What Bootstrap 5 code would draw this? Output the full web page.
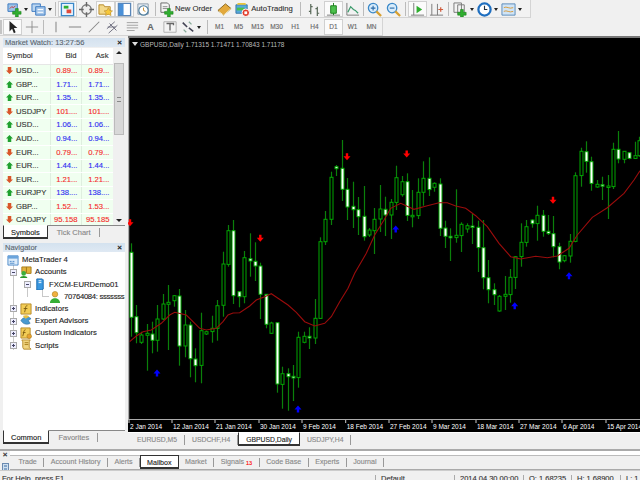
<!DOCTYPE html>
<html lang="en">
<head>
<meta charset="UTF-8">
<title>MetaTrader 4</title>
<link href="https://cdn.jsdelivr.net/npm/bootstrap@5.3.0/dist/css/bootstrap.min.css" rel="stylesheet">
<style>
html, body { height: 100%; overflow: hidden; }
body { background: #f0f0f0; font-family: "Liberation Sans", Arial, sans-serif; font-size: 7.500px; color: #333; line-height: 1; -webkit-text-stroke: .12px; }
.app { width: 640px; height: 480px; overflow: hidden; }
/* toolbars */
.tools { height: 36px; flex: none; }
.tbar { background: #f2f2f2; border-bottom: 1px solid #d4d4d4; border-right: 1px solid #d4d4d4; }
.tbar-a { width: 531px; height: 18px; padding: 1px 0 0 5px; }
.tbar-b { width: 383px; height: 18px; margin-top: 0; padding-top: 1px; }
.tb { height: 16px; width: 19px; flex: none; display: flex; align-items: center; justify-content: center; color: #666; font-size: 6.500px; }
.tb.on { background: #fbfbfb; box-shadow: inset 0 0 0 1px #d0d0d0; }
.tb.dd { width: 24px; justify-content: flex-start; padding-left: 2px; gap: 2px; }
.tb.dd-w { width: 26px; }
.tb.txt { width: auto; gap: 1px; font-size: 7.700px; color: #333; padding: 0 3px 0 1px; }
.tb.pad-r { padding-right: 5px; }
.tb.glyph-a { font-size: 9px; font-weight: 700; }
.caret-d { width: 0; height: 0; border: 2.500px solid transparent; border-top: 3px solid #222; border-bottom: 0; }
.tsep { width: 1px; height: 14px; background: #bbb; margin: 0 2px; flex: none; }
.tsep.tight { margin: 0 1px; }
.tsep.wide { margin-right: 4px; }
.grip { width: 3px; height: 14px; border-left: 2px solid #c4c4c4; flex: none; }
/* left panes */
.side { width: 128px; flex: none; padding: 2px 3px 0; }
.ptitle { height: 9px; background: linear-gradient(#d4e2ef, #dfe9f3); color: #5a6670; padding: 1px 2px 0; flex: none; }
.ptitle b { font-size: 8px; color: #222; margin-right: 1px; line-height: 7px; }
.ptitle.nav-t { margin-top: 4px; }
.mw { flex: none; height: 177px; background: #fff; margin-top: 1px; }
.mw-table { width: 110px; margin: 0; table-layout: fixed; --bs-table-bg: transparent; }
.mw-table th, .mw-table td { padding: 0 0 0 3px; height: 13.600px; border: 0; border-right: 1px solid #dfeedf; border-bottom: 1px solid #fff; font-weight: 400; font-size: 7.700px; white-space: nowrap; background: #f0fff0; box-shadow: none; color: #333; line-height: 1; vertical-align: middle; }
.mw-table th { height: 16px; background: #fff; border-bottom: 1px solid #e6e6e6; border-right: 1px solid #eee; padding-left: 4px; }
.mw-table .num { text-align: right; padding: 0 3px 0 0; }
.mw-table th.num { padding-right: 4px; }
.mw-table td.up { color: #2d2df0; }
.mw-table td.dn { color: #f52a2a; }
.tick { display: inline-block; width: 7px; height: 7px; margin-right: 3px; vertical-align: -1px; }
.scrl { width: 12px; background: #f0f0f0; position: relative; flex: none; }
.scrl-thumb { height: 72px; margin: 9px 1px 0; background: #d8d8d8; border: 1px solid #bbb; position: relative; }
.scrl-thumb::after { content: ""; position: absolute; left: 2px; right: 2px; top: 33px; height: 5px; border-top: 1px solid #888; border-bottom: 1px solid #888; }
.scrl i { display: block; width: 0; margin: 3px auto 0; border: 3px solid transparent; border-bottom: 3px solid #222; border-top: 0; }
.scrl i.low { position: absolute; bottom: 3px; left: 3px; margin: 0; border-bottom: 0; border-top: 3px solid #222; }
.ptabs { height: 14px; flex: none; border-top: 1px solid #888; background: #f0f0f0; flex-wrap: nowrap; color: #888; }
.ptab { padding: 1px 8px 0; border-right: 1px solid #999; height: 9px; margin-top: 2px; white-space: nowrap; }
.ptab.act { background: #fff; color: #222; height: 14px; margin: -1px 1px 0 0; padding: 3px 7px 0; border: 1px solid #333; border-top-color: #fff; border-bottom-width: 2px; }
.nav-pane { background: #fff; height: 178px; flex: none; position: relative; padding-top: 2px; }
.tree { margin: 0; padding: 0; list-style: none; white-space: nowrap; color: #222; }
.tree li { height: 12.200px; display: flex; align-items: center; gap: 3px; font-size: 7.700px; }
.tree svg { flex: none; }
.lv0 { padding-left: 4px; }
.lv1 { padding-left: 7px; }
.lv2 { padding-left: 21px; }
.tree li.lv3 { padding-left: 46px; letter-spacing: -.3px; }
.tline { position: absolute; left: 10px; top: 12px; width: 1px; height: 86px; background: #c8c8c8; }
.tline2 { position: absolute; left: 24px; top: 32px; width: 1px; height: 13px; background: #c8c8c8; }
.tline3 { position: absolute; left: 39px; top: 33px; width: 7px; height: 12px; border-left: 1px solid #c8c8c8; border-bottom: 1px solid #c8c8c8; }
.xp { width: 7px; height: 7px; border: 1px solid #aaa; background: #eef; position: relative; flex: none; }
.xp::before { content: ""; position: absolute; left: 1px; right: 1px; top: 2px; height: 1px; background: #446; }
.xp.pl::after { content: ""; position: absolute; top: 1px; bottom: 1px; left: 2px; width: 1px; background: #446; }
/* chart */
.chart-wrap { min-width: 0; }
.chart-top { height: 2px; background: #777; flex: none; }
.chart-svg { display: block; width: 512px; height: 394px; flex: none; background: #000; }
.ctabs { height: 14px; flex: none; border-top: 1px solid #fff; background: #f0f0f0; color: #888; padding-left: 2px; font-size: 6.800px; }
.ctab { padding: 2px 7px 0; border-right: 1px solid #999; height: 10px; margin-top: 2px; white-space: nowrap; }
.ctab.act { background: #fff; color: #222; height: 14px; margin: -1px 0 0 0; padding: 4px 7px 0; border: 1px solid #333; border-top-color: #fff; border-bottom-width: 2px; }
/* terminal */
.term { height: 21px; flex: none; border-top: 2px solid #aaa; position: relative; }
.term-x { width: 10px; flex: none; font-size: 8px; padding-top: 0; }
.term-strip { height: 5px; background: #fff; border-bottom: 1px solid #bbb; flex: none; }
.term-tabs { height: 14px; color: #888; padding-left: 2px; border-bottom: 1px solid #aaa; flex: none; font-size: 7.100px; }
.ttab { padding: 1px 6.500px 0; border-right: 1px solid #999; height: 9px; margin-top: 2px; white-space: nowrap; }
.ttab.act { background: #fff; color: #222; height: 14px; margin: -1px 0 0 0; padding: 4px 6px 0; border: 1px solid #333; border-bottom-width: 2px; }
.ttab sup { color: #f00; font-size: 5.500px; top: 1px; vertical-align: baseline; position: relative; }
.stat { height: 10px; flex: none; border-top: 1px solid #ccc; overflow: hidden; color: #333; padding-top: 4px; white-space: nowrap; }
.stat-help { width: 375px; flex: none; padding-left: 2px; }
.scell { padding-left: 5px; border-left: 1px solid #aaa; height: 14px; flex: none; }
.chart-svg text { font-family: "Liberation Sans", Arial, sans-serif; font-size: 6.500px; }
</style>
</head>
<body>
<svg width="0" height="0" class="d-block position-absolute">
  <defs>
    <symbol id="i-new" viewBox="0 0 16 16"><path d="M1 2h10v8H1z" fill="#9cc3e8" stroke="#3a78c0"/><path d="M3 7l2-2 2 1 2-2" stroke="#c33" fill="none"/><path d="M9 7h3v3h3v3h-3v3H9v-3H6v-3h3z" fill="#2fae2f" stroke="#1a7d1a" stroke-width=".6"/></symbol>
    <symbol id="i-prof" viewBox="0 0 16 16"><path d="M1 2h9v8H1z" fill="#bcd6f0" stroke="#3a78c0"/><path d="M5 5h10v9H5z" fill="#a5c6ea" stroke="#3a78c0"/><path d="M7 8h6M7 11h6" stroke="#fff"/></symbol>
    <symbol id="i-mw" viewBox="0 0 16 16"><path d="M1.500 1.500h13v13h-13z" fill="#e8f4ff" stroke="#3a88c8" stroke-width="1.400"/><path d="M4 4h5v3H4z" fill="#2fae2f"/><path d="M7 8h5v4H7z" fill="#e04a3a"/></symbol>
    <symbol id="i-nav" viewBox="0 0 16 16"><circle cx="8" cy="8" r="5" fill="#eee" stroke="#777" stroke-width="1.500"/><path d="M8 0v5M8 11v5M0 8h5M11 8h5" stroke="#666" stroke-width="1.500"/></symbol>
    <symbol id="i-fold" viewBox="0 0 16 16"><path d="M1 3h5l1 2h6v8H1z" fill="#f3d98a" stroke="#b58a2a"/><path d="M11 6l1.500 3 3 .5-2.200 2 .6 3-2.900-1.500-2.900 1.500.6-3-2.200-2 3-.5z" fill="#f7c83a" stroke="#b58a2a" stroke-width=".6"/></symbol>
    <symbol id="i-term" viewBox="0 0 16 16"><path d="M1.500 1.500h13v13h-13z" fill="#fff" stroke="#5a86b8" stroke-width="1.400"/><path d="M2 2h5v12H2z" fill="#4a90d8"/></symbol>
    <symbol id="i-test" viewBox="0 0 16 16"><path d="M2 2h11v11H2z" fill="#e8eef4" stroke="#8a9aaa"/><circle cx="8" cy="9" r="5" fill="#fff" stroke="#4a7a9a" stroke-width="1.200"/><path d="M8 6v3l2 1" stroke="#c88a2a" fill="none"/></symbol>
    <symbol id="i-order" viewBox="0 0 16 16"><path d="M2 1h7l2 2v8H2z" fill="#f4f4f4" stroke="#666"/><path d="M4 5h5M4 7h5" stroke="#888"/><path d="M9 7h3v3h3v3h-3v3H9v-3H6v-3h3z" fill="#2fae2f" stroke="#1a7d1a" stroke-width=".6"/></symbol>
    <symbol id="i-book" viewBox="0 0 16 16"><path d="M1 9l8-7 6 5-8 7z" fill="#e3a93c" stroke="#8a6418"/><path d="M2 10l5 4 8-7" fill="none" stroke="#fff3c8"/></symbol>
    <symbol id="i-auto" viewBox="0 0 16 16"><path d="M1 3h12v9H1z" fill="#55a8dc" stroke="#3a78a8"/><path d="M3 1h8l1 2H2z" fill="#e8c53a"/><path d="M2 6h8v3H2z" fill="#4cbf4c"/><circle cx="11.500" cy="11.500" r="4" fill="#e03a2a" stroke="#fff"/><rect x="10" y="10" width="3" height="3" fill="#fff"/></symbol>
    <symbol id="i-bars" viewBox="0 0 16 16"><path d="M4 2v11M2 10h2M4 5h2M11 5v10M9 7h2M11 12h2" stroke="#5a6a5a" stroke-width="1.300" fill="none"/></symbol>
    <symbol id="i-candle" viewBox="0 0 16 16"><path d="M1 14h14" stroke="#777"/><path d="M8 1v13" stroke="#1a7d1a"/><path d="M5 4h6v8H5z" fill="#4cc04c" stroke="#1a7d1a"/></symbol>
    <symbol id="i-line" viewBox="0 0 16 16"><path d="M2 1v13h13" stroke="#777" fill="none"/><path d="M3 11l3-6 3 3 2 1 3 3" stroke="#3a9a6a" stroke-width="1.300" fill="none"/></symbol>
    <symbol id="i-zin" viewBox="0 0 16 16"><circle cx="6.500" cy="6.500" r="5" fill="#d8ecfb" stroke="#3a88c8" stroke-width="1.400"/><path d="M4 6.500h5M6.500 4v5" stroke="#2a6aa8" stroke-width="1.200"/><path d="M10 10l5 5" stroke="#d8a030" stroke-width="2.400"/></symbol>
    <symbol id="i-zout" viewBox="0 0 16 16"><circle cx="6.500" cy="6.500" r="5" fill="#d8ecfb" stroke="#3a88c8" stroke-width="1.400"/><path d="M4 6.500h5" stroke="#2a6aa8" stroke-width="1.200"/><path d="M10 10l5 5" stroke="#d8a030" stroke-width="2.400"/></symbol>
    <symbol id="i-ascr" viewBox="0 0 16 16"><path d="M1 14h14M4 1v13" stroke="#777"/><path d="M7 4l6 4-6 4z" fill="#2fae2f"/></symbol>
    <symbol id="i-shift" viewBox="0 0 16 16"><path d="M1 14h14M3 2v12M9 2v12" stroke="#777"/><path d="M10 8h5M12.500 5.500v5" stroke="#d05a3a" stroke-width="1.300"/></symbol>
    <symbol id="i-tmpl" viewBox="0 0 16 16"><path d="M1 1h8v10H1zM5 3h7v9H5z" fill="#f4f4f4" stroke="#777"/><path d="M8 8h3v3h3v3h-3v2H8v-2H5v-3h3z" fill="#2fae2f" stroke="#1a7d1a" stroke-width=".6"/></symbol>
    <symbol id="i-clock" viewBox="0 0 16 16"><circle cx="8" cy="8" r="6.500" fill="#fff" stroke="#1f6fc0" stroke-width="2.400"/><path d="M8 4v4h3" stroke="#234" fill="none" stroke-width="1.200"/></symbol>
    <symbol id="i-pic" viewBox="0 0 16 16"><path d="M1 2h14v12H1z" fill="#cfe4f6" stroke="#5a8ab8"/><path d="M3 6c3-2 6 2 10 0M3 10c3-2 6 2 10 0" stroke="#d89a3a" fill="none"/></symbol>
    <symbol id="i-arrow" viewBox="0 0 16 16"><path d="M4 1l9 8H9l2 5-2 1-2-5-3 3z" fill="#222"/></symbol>
    <symbol id="i-cross" viewBox="0 0 16 16"><path d="M8 1v14M1 8h14" stroke="#888"/></symbol>
    <symbol id="i-vl" viewBox="0 0 16 16"><path d="M8 2v12" stroke="#888" stroke-width="1.200"/></symbol>
    <symbol id="i-hl" viewBox="0 0 16 16"><path d="M1 8h14" stroke="#888" stroke-width="1.200"/></symbol>
    <symbol id="i-tl" viewBox="0 0 16 16"><path d="M2 14L14 2" stroke="#888" stroke-width="1.200"/></symbol>
    <symbol id="i-chan" viewBox="0 0 16 16"><path d="M1 10l9-8M3 15l10-9M4 4l8 8M2 8h9" stroke="#667" fill="none"/></symbol>
    <symbol id="i-fib" viewBox="0 0 16 16"><path d="M2 3h13M2 6h13M2 9h13M2 12h9" stroke="#999"/></symbol>
    <symbol id="i-ta" viewBox="0 0 16 16"><path d="M1 2h14v12H1z" fill="#f4f4f4" stroke="#aaa"/><path d="M4 4h8v2M8 4v8" stroke="#666" stroke-width="1.500" fill="none"/></symbol>
    <symbol id="i-arrs" viewBox="0 0 16 16"><path d="M2 3l5 5M9 9l5 4" stroke="#445" stroke-width="1.800"/><path d="M9 2l3 3M3 11l3 3" stroke="#8a9" stroke-width="1.500"/></symbol>
    <symbol id="i-up" viewBox="0 0 8 8"><path d="M4 0l4 4H6v4H2V4H0z" fill="#1fa02f"/></symbol>
    <symbol id="i-dn" viewBox="0 0 8 8"><path d="M4 8L0 4h2V0h4v4h2z" fill="#d9552a"/></symbol>
    <symbol id="i-mt" viewBox="0 0 13 13"><path d="M1 2h11v10H1z" fill="#dcebf9" stroke="#4a88c8"/><path d="M1 2h11v3H1z" fill="#6aa4dc"/><path d="M3 8h2M6 8h2M3 10h5" stroke="#4a88c8"/></symbol>
    <symbol id="i-acc" viewBox="0 0 13 13"><path d="M2 1h5v6H2zM7 1h5v7H7z" fill="#e3b23c" stroke="#a67c1a"/><circle cx="4" cy="8" r="2.500" fill="#3cae3c"/><path d="M0 13c0-3 8-3 8 0z" fill="#2a9a2a"/></symbol>
    <symbol id="i-srv" viewBox="0 0 13 13"><path d="M3 1h6l1 1v10l-2 1H3z" fill="#3a98e0" stroke="#1c6cb0"/><path d="M5 3h3M5 5h3" stroke="#fff"/></symbol>
    <symbol id="i-usr" viewBox="0 0 13 13"><circle cx="6.500" cy="3.500" r="3" fill="#f0b040" stroke="#a67c1a" stroke-width=".6"/><path d="M1 13c0-7 11-7 11 0z" fill="#36ae36"/></symbol>
    <symbol id="i-ind" viewBox="0 0 13 13"><path d="M1 1h11v11H1z" fill="#f2cc55" stroke="#b58a2a"/><path d="M8 3c-2 0-2 1-2 3l-1 4M4 6h4" stroke="#7a5a10" fill="none"/></symbol>
    <symbol id="i-ea" viewBox="0 0 13 13"><path d="M1 6c2-4 8-5 11-2l-3 2 2 3c-3 2-8 1-10-3z" fill="#4a9ad0" stroke="#2a6a98" stroke-width=".6"/><path d="M3 1c2-1 6-1 7 1L6 4z" fill="#e8c040"/></symbol>
    <symbol id="i-cus" viewBox="0 0 13 13"><path d="M1 1h10v11H1z" fill="#f2cc55" stroke="#b58a2a"/><path d="M6 3c-1 0-2 1-2 3l-1 4M3 6h3" stroke="#7a5a10" fill="none"/><circle cx="10" cy="10" r="2.500" fill="#e8a030" stroke="#a67c1a" stroke-width=".6"/></symbol>
    <symbol id="i-scr" viewBox="0 0 13 13"><path d="M2 1h9l-1 2v6l2 2H4L3 9V3z" fill="#f0d480" stroke="#b58a2a"/><path d="M5 4h4M5 6h4" stroke="#a67c1a"/></symbol>
  </defs>
</svg>

<div class="app d-flex flex-column">
  <div class="tools">
    <div class="tbar tbar-a d-flex align-items-center">
      <div class="tb dd"><svg width="15" height="15"><use href="#i-new"/></svg><span class="caret-d"></span></div>
      <div class="tb dd"><svg width="15" height="15"><use href="#i-prof"/></svg><span class="caret-d"></span></div>
      <span class="tsep"></span>
      <div class="tb on"><svg width="15" height="15"><use href="#i-mw"/></svg></div>
      <div class="tb"><svg width="15" height="15"><use href="#i-nav"/></svg></div>
      <div class="tb on"><svg width="15" height="15"><use href="#i-fold"/></svg></div>
      <div class="tb on"><svg width="15" height="15"><use href="#i-term"/></svg></div>
      <div class="tb"><svg width="15" height="15"><use href="#i-test"/></svg></div>
      <span class="tsep"></span>
      <div class="tb txt"><svg width="15" height="15"><use href="#i-order"/></svg>New Order</div>
      <div class="tb"><svg width="15" height="15"><use href="#i-book"/></svg></div>
      <div class="tb txt pad-r"><svg width="15" height="15"><use href="#i-auto"/></svg>AutoTrading</div>
      <span class="tsep wide"></span>
      <div class="tb"><svg width="15" height="15"><use href="#i-bars"/></svg></div>
      <div class="tb on"><svg width="15" height="15"><use href="#i-candle"/></svg></div>
      <div class="tb"><svg width="15" height="15"><use href="#i-line"/></svg></div>
      <span class="tsep tight"></span>
      <div class="tb"><svg width="15" height="15"><use href="#i-zin"/></svg></div>
      <div class="tb"><svg width="15" height="15"><use href="#i-zout"/></svg></div>
      <span class="tsep"></span>
      <div class="tb on"><svg width="15" height="15"><use href="#i-ascr"/></svg></div>
      <div class="tb"><svg width="15" height="15"><use href="#i-shift"/></svg></div>
      <span class="tsep"></span>
      <div class="tb dd"><svg width="15" height="15"><use href="#i-tmpl"/></svg><span class="caret-d"></span></div>
      <div class="tb dd"><svg width="15" height="15"><use href="#i-clock"/></svg><span class="caret-d"></span></div>
      <div class="tb dd"><svg width="15" height="15"><use href="#i-pic"/></svg><span class="caret-d"></span></div>
    </div>
    <div class="tbar tbar-b d-flex align-items-center">
      <span class="grip"></span>
      <div class="tb on"><svg width="14" height="14"><use href="#i-arrow"/></svg></div>
      <div class="tb"><svg width="14" height="14"><use href="#i-cross"/></svg></div>
      <span class="tsep"></span>
      <div class="tb"><svg width="14" height="14"><use href="#i-vl"/></svg></div>
      <div class="tb"><svg width="14" height="14"><use href="#i-hl"/></svg></div>
      <div class="tb"><svg width="14" height="14"><use href="#i-tl"/></svg></div>
      <div class="tb"><svg width="14" height="14"><use href="#i-chan"/></svg></div>
      <div class="tb"><svg width="14" height="14"><use href="#i-fib"/></svg></div>
      <div class="tb glyph-a">A</div>
      <div class="tb"><svg width="14" height="14"><use href="#i-ta"/></svg></div>
      <div class="tb dd dd-w"><svg width="14" height="14"><use href="#i-arrs"/></svg><span class="caret-d"></span></div>
      <span class="tsep"></span>
      <div class="tb">M1</div><div class="tb">M5</div><div class="tb">M15</div><div class="tb">M30</div><div class="tb">H1</div><div class="tb">H4</div>
      <div class="tb on">D1</div><div class="tb">W1</div><div class="tb">MN</div>
    </div>
  </div>

  <div class="d-flex flex-grow-1" style="min-height:0">
    <div class="side d-flex flex-column">
      <div class="ptitle d-flex justify-content-between"><span>Market Watch: 13:27:56</span><b>×</b></div>
      <div class="mw d-flex overflow-hidden">
        <div class="overflow-hidden flex-grow-1">
          <table class="table mw-table">
            <colgroup><col style="width:47px"><col style="width:31px"><col style="width:32px"></colgroup>
            <thead><tr><th>Symbol</th><th class="num">Bid</th><th class="num">Ask</th></tr></thead>
            <tbody id="mwRows"></tbody>
          </table>
        </div>
        <div class="scrl"><i></i><div class="scrl-thumb"></div><i class="low"></i></div>
      </div>
      <div class="ptabs d-flex"><div class="ptab act">Symbols</div><div class="ptab">Tick Chart</div></div>

      <div class="ptitle nav-t d-flex justify-content-between"><span>Navigator</span><b>×</b></div>
      <div class="nav-pane">
        <span class="tline"></span><span class="tline2"></span><span class="tline3"></span>
        <ul class="tree position-relative">
          <li class="lv0"><svg width="12" height="12"><use href="#i-mt"/></svg>MetaTrader 4</li>
          <li class="lv1"><span class="xp"></span><svg width="12" height="12"><use href="#i-acc"/></svg>Accounts</li>
          <li class="lv2"><span class="xp"></span><svg width="12" height="12"><use href="#i-srv"/></svg>FXCM-EURDemo01</li>
          <li class="lv3"><svg width="12" height="12"><use href="#i-usr"/></svg>70764084: sssssss</li>
          <li class="lv1"><span class="xp pl"></span><svg width="12" height="12"><use href="#i-ind"/></svg>Indicators</li>
          <li class="lv1"><span class="xp pl"></span><svg width="12" height="12"><use href="#i-ea"/></svg>Expert Advisors</li>
          <li class="lv1"><span class="xp pl"></span><svg width="12" height="12"><use href="#i-cus"/></svg>Custom Indicators</li>
          <li class="lv1"><span class="xp pl"></span><svg width="12" height="12"><use href="#i-scr"/></svg>Scripts</li>
        </ul>
      </div>
      <div class="ptabs d-flex"><div class="ptab act">Common</div><div class="ptab">Favorites</div></div>
    </div>

    <div class="chart-wrap flex-grow-1 d-flex flex-column">
      <div class="chart-top"></div>
      <svg id="chart" class="chart-svg" viewBox="128 38 512 394" xmlns="http://www.w3.org/2000/svg"></svg>
      <div class="ctabs d-flex">
        <div class="ctab">EURUSD,M5</div><div class="ctab">USDCHF,H4</div><div class="ctab act">GBPUSD,Daily</div><div class="ctab">USDJPY,H4</div>
      </div>
    </div>
  </div>

  <div class="term d-flex">
    <div class="term-x d-flex flex-column align-items-center fw-bold">×<svg width="7" height="10" class="mt-1"><rect x=".5" y=".5" width="6" height="9" fill="#cfe0f0" stroke="#6a8ab0"/><path d="M2 3h3M2 6h3" stroke="#3a6aa0"/></svg></div>
    <div class="flex-grow-1 d-flex flex-column">
      <div class="term-strip"></div>
      <div class="term-tabs d-flex">
        <div class="ttab">Trade</div><div class="ttab">Account History</div><div class="ttab">Alerts</div>
        <div class="ttab act">Mailbox</div><div class="ttab">Market</div><div class="ttab">Signals <sup>13</sup></div>
        <div class="ttab">Code Base</div><div class="ttab">Experts</div><div class="ttab">Journal</div>
      </div>
    </div>
  </div>

  <div class="stat d-flex">
    <div class="stat-help">For Help, press F1</div>
    <div class="scell" style="width:79px">Default</div>
    <div class="scell" style="width:69px">2014.04.30 00:00</div>
    <div class="scell" style="width:48px">O: 1.68235</div>
    <div class="scell" style="width:49px">H: 1.68900</div>
    <div class="scell">L: 1.68</div>
  </div>
</div>

<script>
  // market watch rows: symbol, bid, ask, up
  const quotes = [
    ['USD...', '0.89...', '0.89...', 0], ['GBP...', '1.71...', '1.71...', 1], ['EUR...', '1.35...', '1.35...', 1],
    ['USDJPY', '101....', '101....', 0], ['USD...', '1.06...', '1.06...', 1], ['AUD...', '0.94...', '0.94...', 1],
    ['EUR...', '0.79...', '0.79...', 0], ['EUR...', '1.44...', '1.44...', 1], ['EUR...', '1.21...', '1.21...', 0],
    ['EURJPY', '138....', '138....', 1], ['GBP...', '1.52...', '1.53...', 0], ['CADJPY', '95.158', '95.185', 0]
  ];
  document.getElementById('mwRows').innerHTML = quotes.map(q => {
    const c = q[3] ? 'up' : 'dn';
    return `<tr><td><svg class="tick"><use href="#i-${q[3] ? 'up' : 'dn'}"/></svg>${q[0]}</td><td class="num ${c}">${q[1]}</td><td class="num ${c}">${q[2]}</td></tr>`;
  }).join('');

  // candles read off the zoomed picture: x, wickTop, wickBot, bodyTop, bodyBot, white
  const z8 = [[8,70,350,97,292,1],[24,255,370,290,338,1],[40,335,372,345,367,0],[56,312,452,340,346,0],[72,305,400,342,361,1],[88,255,395,297,361,0],[104,222,300,252,297,0],[120,195,390,247,253,0],[137,225,260,227,242,0],[153,207,437,228,378,1],[170,270,412,315,378,0],[186,305,472,315,416,1],[202,385,487,417,437,1],[218,278,490,332,436,0],[235,332,345,335,342,0],[251,287,368,325,335,0],[267,240,362,257,325,0],[284,95,290,132,256,0],[300,15,140,32,133,0],[316,0,252,32,227,1],[332,213,262,215,230,1],[348,93,250,113,230,0],[365,40,170,116,123,1],[381,67,183,124,138,1],[397,128,297,138,223,1],[414,222,325,223,313,1],[430,305,342,309,340,0],[446,308,518,308,492,1],[462,440,566,461,493,0],[479,445,572,461,470,1],[495,435,543,469,474,1],[511,335,503,352,473,0],[527,335,370,349,367,0],[544,322,387,349,354,1],[560,237,372,295,354,0],[576,52,295,65,295,0]];
  const extra = [[325.3,211,245,219.3,241.7,0],[330.7,171.7,225,177.3,219.3,0],[336.3,165,176,166.7,168.7,1],[341.7,140,201,168.3,189.3,1],[347.3,178,220,189.3,207,1],[352.7,181.7,228,206.3,209.7,1],[358,197,235,209.7,216.7,1],[363.7,186,240.7,216.3,236.7,1],[369,228,237,230,235,0],[374.3,208,254,219.3,230.7,0],[380,185,232,209,219,0]];
  const z9 = [[4,230,348,268,285,1],[21,237,357,247,285,0],[37,137,270,173,247,0],[53,168,230,185,224,0],[69,160,303,185,286,1],[85,210,322,286,288,0],[101,175,297,217,287,0],[118,124,257,175,217,0],[134,112,228,175,209,1],[150,187,215,190,202,0],[167,175,348,192,325,1],[183,302,384,324,349,1],[199,325,423,349,353,1],[216,208,368,346,353,0],[232,307,396,313,347,0],[248,310,338,317,327,0],[265,282,372,318,322,1],[281,302,456,322,383,1],[297,300,508,383,473,1],[313,420,550,473,509,1],[329,490,555,509,524,1],[346,525,575,529,573,0],[362,468,570,523,529,0],[378,447,548,472,524,0],[394,408,507,410,472,0],[411,310,440,367,410,0],[427,300,380,320,367,0],[443,298,323,300,311,1],[459,257,362,286,311,0],[476,270,350,286,334,1],[492,285,345,334,341,1],[508,288,412,341,380,1],[524,368,448,380,426,1],[541,405,427,407,422,0],[557,342,428,364,408,0],[573,157,367,167,364,0],[590,83,200,94,167,0],[606,64,158,95,124,1],[622,110,212,125,190,1],[639,180,203,193,201,0],[655,170,240,194,198,1],[671,165,297,198,200,0],[687,68,207,88,200,0],[703,33,130,88,117,1],[720,93,130,94,118,0],[736,97,118,98,115,1],[753,65,117,107,115,0],[766,50,110,62,107,0]];
  const conv = (list, x0, y0) => list.map(c => [x0 + c[0] / 3, y0 + c[1] / 3, y0 + c[2] / 3, y0 + c[3] / 3, y0 + c[4] / 3, c[5]]);
  const candles = [...conv(z8, 128, 220), ...extra, ...conv(z9, 384, 120)];

  const ma = [...[[5,365],[25,348],[45,335],[70,330],[100,310],[125,285],[140,277],[175,285],[195,305],[215,325],[235,330],[265,325],[285,305],[300,285],[315,279],[335,278],[365,258],[385,240],[410,230],[430,221],[450,235],[480,255],[505,277],[530,305],[560,318],[590,310],[610,290],[635,245],[660,205],[680,160],[715,100],[740,45]].map(p => [128 + p[0] / 3, 220 + p[1] / 3]),
    ...[[0,300],[20,265],[50,250],[90,268],[130,257],[165,248],[190,248],[215,258],[245,265],[275,287],[310,320],[345,370],[380,410],[410,417],[455,409],[490,413],[520,408],[555,385],[580,345],[625,292],[670,263],[720,220],[750,180],[768,152]].map(p => [384 + p[0] / 3, 120 + p[1] / 3])];

  const downs = [[347, 156.700], [260.300, 238.300], [406.700, 154], [553, 200.300], [130, 222.700]];
  const ups = [[157, 373], [298, 409], [395.700, 229], [514.700, 305.700], [569, 275.700]];
  const dates = [[130,'2 Jan 2014'],[173,'12 Jan 2014'],[216,'21 Jan 2014'],[260,'30 Jan 2014'],[303,'9 Feb 2014'],[346.700,'18 Feb 2014'],[390,'27 Feb 2014'],[433,'9 Mar 2014'],[477,'18 Mar 2014'],[520,'27 Mar 2014'],[563,'6 Apr 2014'],[607,'15 Apr 2014']];

  let out = '';
  out += `<path d="M128.500 38V420" stroke="#aaa" stroke-width="1.500"/>`;
  candles.forEach(c => {
    const x = Math.round(c[0]) + .5, top = c[3], bot = Math.max(c[4], c[3] + 1.500);
    out += `<path d="M${x} ${c[1].toFixed(1)}V${c[2].toFixed(1)}" stroke="#0a800a" stroke-width="1.200"/>`;
    out += `<rect x="${x - 1.500}" y="${top.toFixed(1)}" width="3" height="${(bot - top).toFixed(1)}" fill="${c[5] ? '#fff' : '#000'}" stroke="#00a800" stroke-width="1"/>`;
  });
  out += `<polyline points="${ma.map(p => p[0].toFixed(1) + ',' + p[1].toFixed(1)).join(' ')}" fill="none" stroke="#9a0c0c" stroke-width="1.100"/>`;
  downs.forEach(p => out += `<path transform="translate(${p[0]} ${p[1]})" d="M-1.200-3.500h2.400v3h2.300L0 3.500-3.500-.5h2.300z" fill="#f00"/>`);
  ups.forEach(p => out += `<path transform="translate(${p[0]} ${p[1]})" d="M-1.200 3.500h2.400v-3h2.300L0-3.500-3.500.5h2.300z" fill="#00f"/>`);
  out += `<path d="M129 419.500H640" stroke="#aaa"/>`;
  dates.forEach(d => {
    out += `<path d="M${d[0] - 1} 420v3" stroke="#ccc"/>`;
    out += `<text x="${d[0]}" y="429" fill="#fff">${d[1]}</text>`;
  });
  out += `<path d="M132 42h6l-3 4z" fill="#ddd"/>`;
  out += `<text x="140" y="47" fill="#bbb">GBPUSD,Daily  1.71315 1.71471 1.70843 1.71178</text>`;
  document.getElementById('chart').innerHTML = out;
</script>
<script src="https://cdn.jsdelivr.net/npm/bootstrap@5.3.0/dist/js/bootstrap.bundle.min.js"></script>
</body>
</html>
